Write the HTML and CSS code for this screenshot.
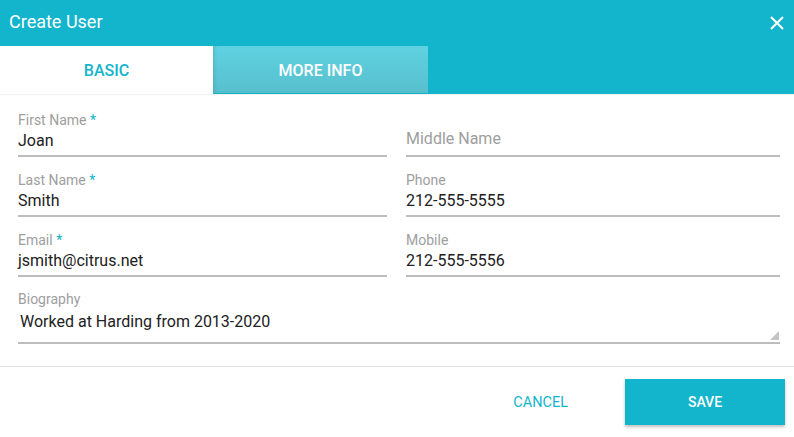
FILE: index.html
```html
<!DOCTYPE html>
<html>
<head>
<meta charset="utf-8">
<link rel="stylesheet" href="styles.css">
</head>
<body>
<div class="dialog">
  <header class="header">
    <h1 class="title">Create User</h1>
    <button class="close" aria-label="Close">
      <svg width="14" height="14" viewBox="0 0 14 14"><path d="M1 1L13 13M13 1L1 13" stroke="#fff" stroke-width="2" fill="none"/></svg>
    </button>
  </header>
  <nav class="tabs">
    <div class="tab tab--active">BASIC</div>
    <div class="tab tab--inactive">MORE INFO</div>
  </nav>
  <main class="form">
    <div class="field">
      <div class="label">First Name <span class="req">*</span></div>
      <div class="value">Joan</div>
    </div>
    <div class="field field--empty">
      <div class="placeholder">Middle Name</div>
    </div>
    <div class="field">
      <div class="label">Last Name <span class="req">*</span></div>
      <div class="value">Smith</div>
    </div>
    <div class="field">
      <div class="label">Phone</div>
      <div class="value">212-555-5555</div>
    </div>
    <div class="field">
      <div class="label">Email <span class="req">*</span></div>
      <div class="value">jsmith@citrus.net</div>
    </div>
    <div class="field">
      <div class="label">Mobile</div>
      <div class="value">212-555-5556</div>
    </div>
    <div class="field field--wide">
      <div class="label">Biography</div>
      <div class="textarea">Worked at Harding from 2013-2020<span class="resize"></span></div>
    </div>
  </main>
  <footer class="footer">
    <button class="btn btn--flat">CANCEL</button>
    <button class="btn btn--raised">SAVE</button>
  </footer>
</div>
</body>
</html>
```
FILE: styles.css
```css
* { box-sizing: border-box; }
html, body { margin: 0; padding: 0; background: #fff; }
body {
  width: 794px;
  height: 437px;
  overflow: hidden;
  font-family: Roboto, "Liberation Sans", sans-serif;
  color: #212121;
}
.header {
  height: 46px;
  background: #12b5cc;
  display: flex;
  align-items: center;
  justify-content: space-between;
  padding: 0 10px 3px 9px;
}
.title {
  margin: 0;
  font-size: 18px;
  font-weight: 400;
  color: #fff;
  line-height: 24px;
}
.close {
  border: 0;
  background: none;
  padding: 0;
  width: 14px;
  height: 14px;
  display: flex;
  margin-top: 3px;
}
.tabs {
  height: 48px;
  background: #12b5cc;
  display: flex;
  align-items: flex-start;
  box-shadow: 0 1px 1px rgba(0,0,0,0.05);
}
.tab {
  height: 48px;
  display: flex;
  align-items: center;
  justify-content: center;
  font-size: 16px;
  font-weight: 500;
}
.tab--active {
  width: 213px;
  background: #fff;
  color: #12b5cc;
}
.tab--inactive {
  width: 215px;
  height: 47px;
  color: #fff;
  padding-top: 1px;
  background: linear-gradient(#5fd2e1, #58bfcd);
  box-shadow: inset 3px 0 4px -2px rgba(0,0,0,0.12);
}
.form {
  display: grid;
  grid-template-columns: 369px 374px;
  column-gap: 19px;
  row-gap: 15px;
  padding: 18px 14px 0 18px;
}
.field {
  height: 45px;
  border-bottom: 2px solid #bdbdbd;
}
.label {
  font-size: 14px;
  line-height: 16px;
  color: #9e9e9e;
}
.req { color: #12b5cc; }
.value {
  font-size: 16px;
  line-height: 26px;
  color: #212121;
}
.field--empty { padding-top: 14px; }
.placeholder {
  font-size: 16px;
  line-height: 26px;
  color: #9e9e9e;
}
.field--wide {
  grid-column: 1 / -1;
  height: 53px;
  margin-top: -1px;
}
.textarea {
  position: relative;
  font-size: 16px;
  line-height: 26px;
  padding: 2px 0 0 2px;
  height: 35px;
}
.resize {
  position: absolute;
  right: 1px;
  bottom: 2px;
  width: 0;
  height: 0;
  border-left: 9px solid transparent;
  border-bottom: 9px solid #c4c4c4;
}
.footer {
  margin-top: 22px;
  border-top: 1px solid #e0e0e0;
  display: flex;
  justify-content: flex-end;
  align-items: center;
  padding: 12px 9px 0 0;
  gap: 30px;
}
.btn {
  font-family: Roboto, "Liberation Sans", sans-serif;
  font-size: 14px;
  font-weight: 500;
  border: 0;
  height: 46px;
  cursor: pointer;
}
.btn--flat {
  background: none;
  color: #12b5cc;
  font-weight: 400;
  font-size: 14.5px;
  padding: 0 27px;
}
.btn--raised {
  width: 160px;
  background: #12b5cc;
  color: #fff;
  box-shadow: 0 2px 3px rgba(0,0,0,0.25);
}
```
